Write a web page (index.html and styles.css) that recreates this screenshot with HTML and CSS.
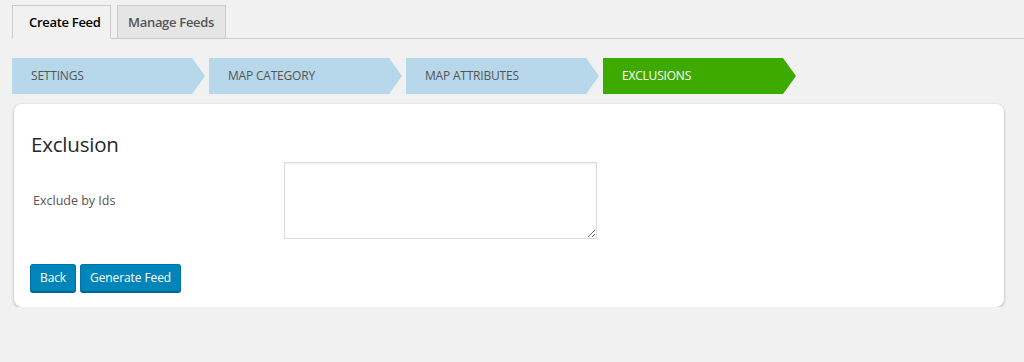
FILE: index.html
```html
<!DOCTYPE html>
<html lang="en">
	<head>
		<meta charset="UTF-8" />
		<meta name="viewport" content="width=device-width, initial-scale=1.0" />
		<title>Create Feed</title>
		<link rel="stylesheet" href="styles.css">
	</head>

	<body>
		<div class="wrap">
			<nav class="nav-tabs">
				<a class="nav-tab active" href="#">Create Feed</a>
				<a class="nav-tab" href="#">Manage Feeds</a>
			</nav>

			<ul class="steps">
				<li class="step">Settings</li>
				<li class="step">Map Category</li>
				<li class="step">Map Attributes</li>
				<li class="step current">Exclusions</li>
			</ul>

			<div class="card">
				<h2 class="card-title">Exclusion</h2>
				<div class="field">
					<label for="excludeIds">Exclude by Ids</label>
					<textarea id="excludeIds"></textarea>
				</div>
				<div class="actions">
					<button class="button">Back</button>
					<button class="button">Generate Feed</button>
				</div>
			</div>
		</div>
	</body>
</html>
```

FILE: styles.css
```css
:root {
	--bg-color: #f1f1f1;
	--text-color: #444;
	--tab-border: #ccc;
	--step-bg: #b7d8ea;
	--step-active: #3daa00;
	--button-bg: #0085ba;
	--button-dark: #006799;
}

body {
	margin: 0;
	background-color: var(--bg-color);
	color: var(--text-color);
	font-family: "Open Sans", "Noto Sans", sans-serif;
	font-size: 13px;
}

.wrap {
	padding: 5px 0 0 12px;
}

.nav-tabs {
	display: flex;
	gap: 6px;
	border-bottom: 1px solid var(--tab-border);
	height: 33px;
}

.nav-tab {
	display: block;
	box-sizing: border-box;
	width: 99px;
	height: 34px;
	padding: 7px 0 0 16px;
	border: 1px solid var(--tab-border);
	background-color: #e5e5e5;
	color: #555;
	font-size: 13px;
	font-weight: 600;
	text-decoration: none;
	letter-spacing: -0.3px;
	white-space: nowrap;
}

.nav-tab + .nav-tab {
	width: 109px;
	padding-left: 10px;
}

.nav-tab.active {
	background-color: var(--bg-color);
	border-bottom-color: var(--bg-color);
	color: #000;
}

.steps {
	display: flex;
	gap: 4px;
	list-style: none;
	margin: 19px 0 0;
	padding: 0;
}

.step {
	box-sizing: border-box;
	width: 193px;
	height: 36px;
	padding-left: 19px;
	line-height: 36px;
	background-color: var(--step-bg);
	color: #555;
	font-size: 12px;
	text-transform: uppercase;
	letter-spacing: -0.2px;
	clip-path: polygon(0 0, calc(100% - 13px) 0, 100% 50%, calc(100% - 13px) 100%, 0 100%);
}

.step.current {
	background-color: var(--step-active);
	color: #fff;
}

.card {
	margin: 10px 20px 0 2px;
	padding: 25px 17px 15px;
	background-color: #fff;
	border-radius: 8px;
	box-shadow: 0 1px 3px rgba(0, 0, 0, 0.3);
}

.card-title {
	margin: 0;
	color: #23282d;
	font-size: 20.5px;
	font-weight: 400;
	line-height: 30px;
	letter-spacing: -0.2px;
}

.field {
	display: flex;
	align-items: center;
	margin-top: 3px;
}

.field label {
	width: 251px;
	padding-left: 2px;
	color: #555;
	font-size: 12.5px;
}

.field textarea {
	box-sizing: border-box;
	width: 313px;
	height: 77px;
	margin: 0;
	border: 1px solid #ddd;
	box-shadow: inset 0 1px 2px rgba(0, 0, 0, 0.07);
	background-color: #fff;
}

.actions {
	display: flex;
	gap: 4px;
	margin-top: 25px;
}

.button {
	box-sizing: border-box;
	height: 28px;
	padding: 0 9px 1px;
	background-color: var(--button-bg);
	border: 1px solid #0073aa;
	border-bottom-color: var(--button-dark);
	border-radius: 3px;
	box-shadow: 0 1px 0 var(--button-dark);
	color: #fff;
	font-family: inherit;
	font-size: 12px;
	letter-spacing: -0.1px;
	cursor: pointer;
}

.actions .button:first-child {
	margin-left: -1px;
}
```
